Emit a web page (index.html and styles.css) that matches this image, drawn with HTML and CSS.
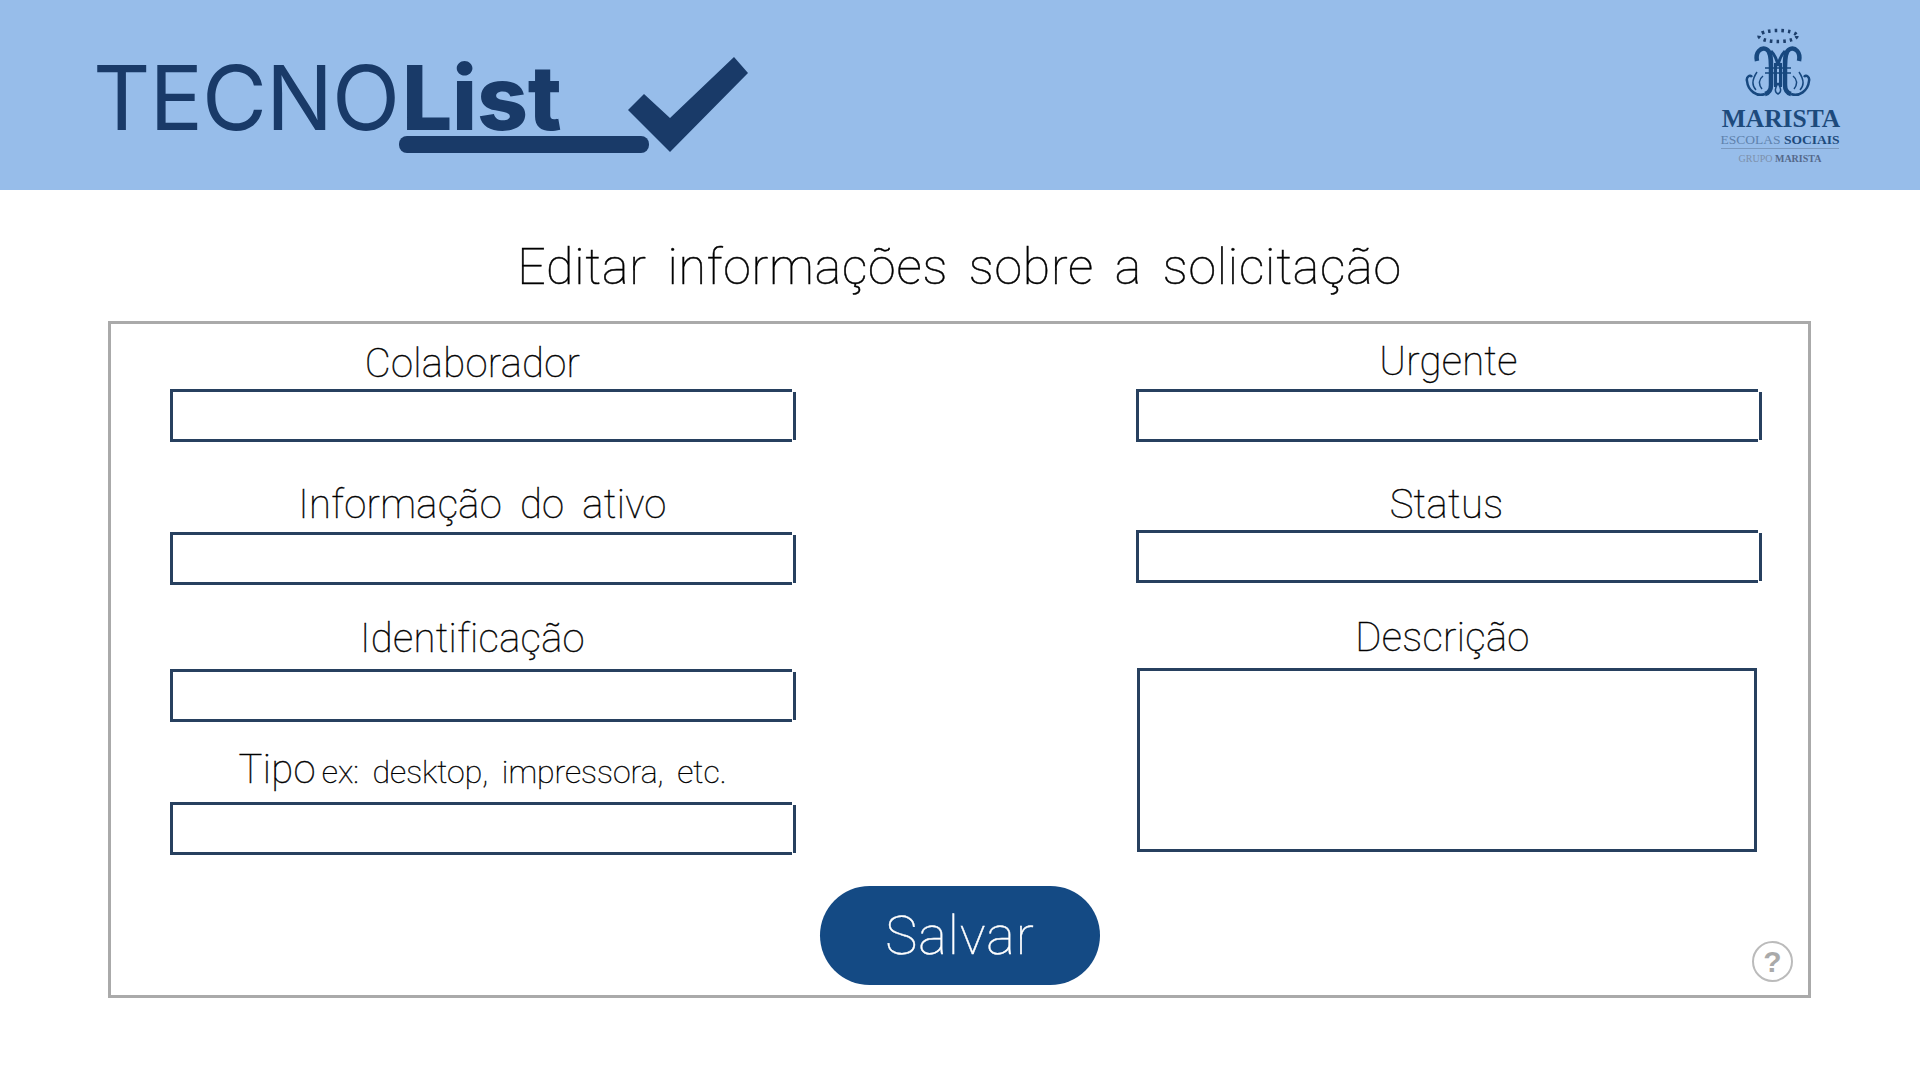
FILE: index.html
```html
<!DOCTYPE html>
<html lang="pt-BR">
<head>
    <meta charset="UTF-8">
    <title>TECNOList - Editar solicitação</title>
    <link rel="stylesheet" href="styles.css">
</head>
<body>
    <header class="top-bar">
        <div class="brand">
            <span class="brand-light">TECNO</span><span class="brand-bold">List</span>
            <span class="brand-line"></span>
            <svg class="brand-check" width="122" height="100" viewBox="0 0 122 100">
                <polygon fill="#193a68" points="1,54 17,38 43,62 107,1 121,17 43,96"/>
            </svg>
        </div>
        <div class="school-logo">
            <svg class="school-mark" width="68" height="76" viewBox="0 0 68 76" fill="none" stroke="#17487f">
                <ellipse cx="34" cy="11" rx="19" ry="5.5" stroke="#1d3f6c" stroke-width="3.5" stroke-dasharray="2.5 4"/>
                <path stroke-width="4.5" d="M13 36 C11 27 17 22 22 24 C27 26 27 34 27 42 V60 C27 65 25 68 21 69"/>
                <path stroke-width="4.5" d="M55 36 C57 27 51 22 46 24 C41 26 41 34 41 42 V60 C41 65 43 68 47 69"/>
                <path stroke-width="3" d="M27 26 C30 29 33 35 34 41 C35 35 38 29 41 26 M31.5 38 V62 M36.5 38 V62"/>
                <path stroke-width="1.5" d="M21 43 H47 M21 48 H47 M34 58 C31 63 30 67 34 69 C38 67 37 63 34 58"/>
                <path stroke-width="2.5" d="M21 69 C13 72 4 66 3 56 C2 52 6 49 8 52 M47 69 C55 72 64 66 65 56 C66 52 62 49 60 52"/>
                <path stroke-width="1.5" d="M12 65 C7 60 9 53 13 47 M56 65 C61 60 59 53 55 47 M18 64 C14 59 15 54 19 51 M50 64 C54 59 53 54 49 51"/>
            </svg>
            <div class="school-name">MARISTA</div>
            <div class="school-sub">ESCOLAS <b>SOCIAIS</b></div>
            <div class="school-group">GRUPO <b>MARISTA</b></div>
        </div>
    </header>

    <main class="content">
        <h1 class="page-title">Editar informações sobre a solicitação</h1>

        <form class="panel">
            <div class="column">
                <div class="field field-first">
                    <label class="shifted">Colaborador</label>
                    <div class="box"><input type="text"></div>
                </div>
                <div class="field field-second">
                    <label>Informação do ativo</label>
                    <div class="box"><input type="text"></div>
                </div>
                <div class="field field-third">
                    <label class="shifted">Identificação</label>
                    <div class="box"><input type="text"></div>
                </div>
                <div class="field field-fourth">
                    <label>Tipo<small>ex: desktop, impressora, etc.</small></label>
                    <div class="box"><input type="text"></div>
                </div>
            </div>
            <div class="column">
                <div class="field field-urgent">
                    <label>Urgente</label>
                    <div class="box"><input type="text"></div>
                </div>
                <div class="field field-status">
                    <label>Status</label>
                    <div class="box"><input type="text"></div>
                </div>
                <div class="field field-desc">
                    <label>Descrição</label>
                    <textarea></textarea>
                </div>
            </div>
            <button type="button" class="save-btn">Salvar</button>
            <span class="help">?</span>
        </form>
    </main>
</body>
</html>
```

FILE: styles.css
```css
* {
    box-sizing: border-box;
}

body {
    margin: 0;
    background-color: white;
    font-family: Roboto, sans-serif;
    font-weight: 100;
    color: #000;
}

.top-bar {
    height: 190px;
    background-color: #97bdea;
    display: flex;
    justify-content: space-between;
    padding: 23px 79px 0 93px;
}

.brand {
    position: relative;
    font-family: Inter, sans-serif;
    font-size: 89px;
    line-height: 150px;
    color: #193a68;
    letter-spacing: -1px;
}

.brand-light {
    font-weight: 400;
}

.brand-bold {
    font-weight: 800;
    margin-left: 3px;
    letter-spacing: -0.3px;
}

.brand-line {
    position: absolute;
    left: 306px;
    top: 113px;
    width: 250px;
    height: 17px;
    border-radius: 8px;
    background-color: #193a68;
}

.brand-check {
    position: absolute;
    left: 534px;
    top: 33px;
}

.school-logo {
    width: 122px;
    margin-top: 2px;
    display: flex;
    flex-direction: column;
    align-items: center;
    font-family: "Liberation Serif", serif;
    color: #1d4a7c;
    font-weight: 400;
}

.school-mark {
    margin: 0 4px 7px 0;
}

.school-name {
    font-size: 25.5px;
    font-weight: 700;
    line-height: 22px;
    margin-bottom: 3px;
    padding-left: 2px;
}

.school-sub {
    font-size: 13.5px;
    line-height: 14px;
    color: #5f82ad;
    border-bottom: 1px solid #7a99bf;
    padding-bottom: 1px;
}

.school-sub b {
    color: #1d4a7c;
}

.school-group {
    font-size: 10px;
    line-height: 16px;
    padding-top: 2px;
    color: #7d90ab;
}

.school-group b {
    color: #55698a;
}

.content {
    padding: 0 109px 0 108px;
}

.page-title {
    margin: 0;
    height: 131px;
    padding-top: 42px;
    font-size: 50px;
    line-height: 70px;
    font-weight: 100;
    text-align: center;
    word-spacing: 8px;
    letter-spacing: 0.8px;
    -webkit-text-stroke: 0.5px #000;
}

.panel {
    position: relative;
    height: 677px;
    border: 3px solid #aaa;
    display: grid;
    grid-template-columns: 625px 625px;
    column-gap: 341px;
    padding-left: 59px;
}

.column {
    display: flex;
    flex-direction: column;
}

.field label {
    display: block;
    height: 44px;
    margin-bottom: 3px;
    font-size: 40px;
    line-height: 44px;
    text-align: center;
    word-spacing: 8px;
    letter-spacing: 0.3px;
    -webkit-text-stroke: 0.4px #000;
}

.field label small {
    font-size: 32px;
    margin-left: 6px;
    word-spacing: 6px;
    letter-spacing: 0;
}

.field label.shifted {
    padding-right: 20px;
}

.field-first {
    margin-top: 18px;
}

.field-second {
    margin-top: 41px;
}

.field-second label {
    margin-bottom: 5px;
}

.field-third {
    margin-top: 32px;
}

.field-third label {
    margin-bottom: 8px;
}

.field-fourth {
    margin-top: 26px;
}

.field-fourth label {
    margin-bottom: 10px;
}

.field-urgent {
    margin-top: 16px;
}

.field-urgent label {
    margin-bottom: 5px;
}

.field-status {
    margin-top: 41px;
}

.field-status label {
    padding-right: 4px;
}

.field-desc {
    margin-top: 33px;
}

.field-desc label {
    margin-bottom: 8px;
    padding-right: 12px;
}

.box {
    position: relative;
    height: 53px;
}

.box::after {
    content: "";
    position: absolute;
    right: -1px;
    top: 3px;
    bottom: 2px;
    width: 3px;
    background-color: #27405f;
}

.box input {
    display: block;
    width: 622px;
    height: 53px;
    padding: 0 8px;
    border: 3px solid #27405f;
    border-right: none;
    border-radius: 0;
    outline: none;
}

textarea {
    display: block;
    width: 620px;
    height: 184px;
    margin-left: 1px;
    border: 3px solid #27405f;
    resize: none;
    outline: none;
}

.save-btn {
    position: absolute;
    left: 709px;
    top: 562px;
    width: 280px;
    height: 99px;
    border: none;
    border-radius: 50px;
    background-color: #144a84;
    color: white;
    font-family: Roboto, sans-serif;
    font-weight: 100;
    font-size: 54px;
    letter-spacing: 1px;
    -webkit-text-stroke: 0.4px white;
}

.help {
    position: absolute;
    right: 15px;
    bottom: 13px;
    width: 41px;
    height: 41px;
    border: 2px solid #bbb;
    border-radius: 50%;
    display: flex;
    align-items: center;
    justify-content: center;
    color: #aaa;
    font-family: "Liberation Sans", sans-serif;
    font-weight: 700;
    font-size: 30px;
}
```
